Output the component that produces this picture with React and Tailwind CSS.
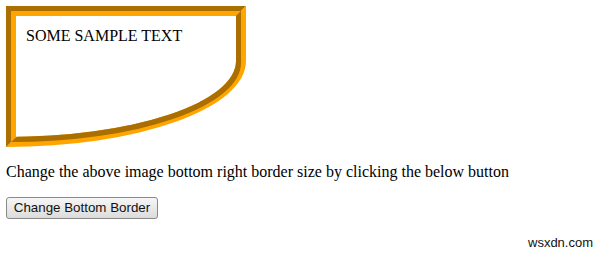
export default function App() {
  return (
    <div className="relative w-[600px] h-[258px] bg-white pt-[6px] pl-[6px] font-['Liberation_Serif',serif] text-black">
      <div className="w-[240px] h-[141px] border-[10px] border-[#ffa500] [border-style:groove] rounded-br-[240px_86px] px-[10px] pt-[11px] text-[16px] leading-[18px]">
        SOME SAMPLE TEXT
      </div>
      <p className="mt-[16px] mb-[14px] text-[16px] leading-[18px]">
        Change the above image bottom right border size by clicking the below button
      </p>
      <button className="h-[22px] w-[152px] border border-[#8a8a8a] rounded-[3px] bg-gradient-to-b from-[#f6f6f6] to-[#dcdcdc] font-['Liberation_Sans',sans-serif] text-[13.33px] leading-[16px] text-[#111]">
        Change Bottom Border
      </button>
      <div className="absolute left-[528px] top-[233px] font-['Liberation_Sans',sans-serif] text-[13px] text-[#111]">
        wsxdn.com
      </div>
    </div>
  );
}
